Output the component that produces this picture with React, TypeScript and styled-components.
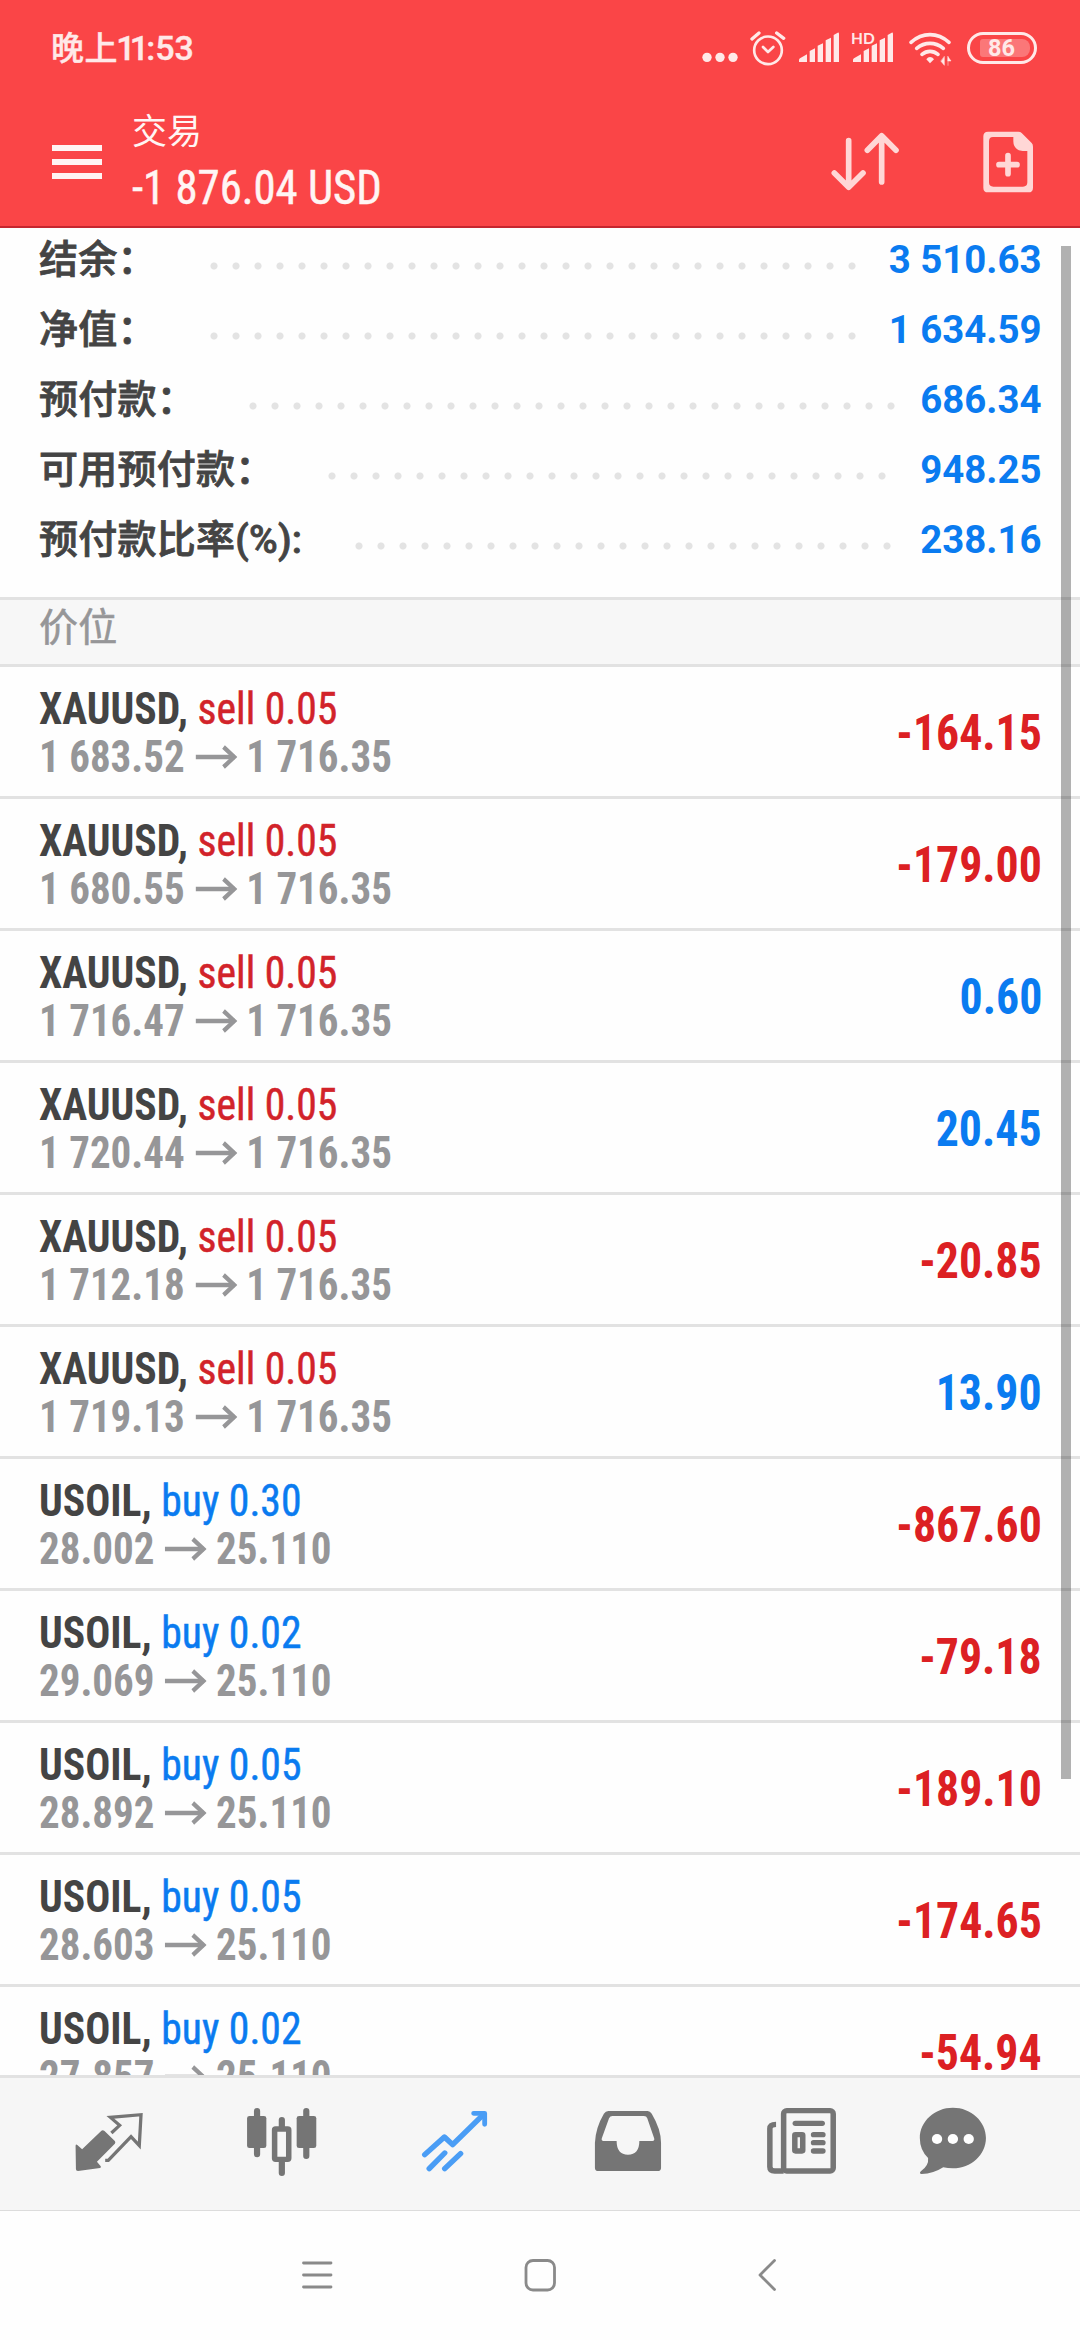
import React from "react";
import styled, { createGlobalStyle } from "styled-components";

const GlobalStyle = createGlobalStyle`
  body {
    margin: 0;
    background: #fff;
  }
  * {
    box-sizing: border-box;
  }
`;

const sans = `Roboto, "Noto Sans CJK SC", sans-serif`;
const condensed = `"Roboto Condensed", Roboto, "Noto Sans CJK SC", sans-serif`;

const color = {
  red: "#fa4547",
  loss: "#dc2023",
  sell: "#d2232a",
  blue: "#0a7bf0",
  text: "#444",
  muted: "#969698",
  line: "#e2e2e2",
  panel: "#f7f7f7",
  icon: "#757575",
};

const Screen = styled.div`
  width: 1080px;
  height: 2340px;
  display: flex;
  flex-direction: column;
  overflow: hidden;
  background: #fefefe;
  font-family: ${sans};
`;

/* ---------- top area ---------- */

const Header = styled.header`
  flex: none;
  height: 228px;
  background: ${color.red};
  border-bottom: 2px solid #c5262f;
`;

const StatusBar = styled.div`
  height: 100px;
  padding: 0 44px 0 51px;
  display: flex;
  justify-content: space-between;
  color: #ffe9e8;
`;

const Clock = styled.div`
  font-size: 34px;
  line-height: 97px;
  font-weight: 500;
  white-space: nowrap;
  -webkit-text-stroke: 0.4px currentColor;
`;

const ClockPeriod = styled.span`
  font-family: "Noto Sans CJK SC", sans-serif;
  font-size: 33px;
  line-height: 1;
  letter-spacing: 0.6px;
`;

const ClockHour = styled.span`
  letter-spacing: -5.8px;
  margin-left: -2px;
  margin-right: 3px;
`;

const StatusIcons = styled.div`
  display: flex;
  align-items: center;
  gap: 12px;

  svg {
    display: block;
    height: 40px;
  }
`;

const SignalWithLabel = styled.div`
  position: relative;
`;

const HdLabel = styled.span`
  position: absolute;
  left: -1px;
  top: 1px;
  font-family: Lato, sans-serif;
  font-size: 15.5px;
  line-height: 15px;
  font-weight: 700;
`;

const Battery = styled.div`
  width: 70px;
  height: 32px;
  margin: -4px -1px 0 1px;
  padding: 4px 4px 4px 10px;
  border: 3px solid #ffe9e8;
  border-radius: 16px;
  display: flex;
`;

const BatteryLevel = styled.div`
  flex: 1;
  border-radius: 3px 8px 8px 3px;
  background: rgba(255, 255, 255, 0.27);
  font-size: 23.5px;
  line-height: 19px;
  font-weight: 700;
  text-align: center;
  padding-right: 7px;
`;

const Toolbar = styled.div`
  height: 126px;
  padding: 0 46px 0 52px;
  display: flex;
  align-items: center;
`;

const MenuButton = styled.div`
  width: 50px;
  margin: 0 30px 2px 0;
  display: flex;
  flex-direction: column;
  gap: 8px;
`;

const MenuBar = styled.span`
  height: 6px;
  background: #fff4f3;
`;

const Titles = styled.div`
  flex: 1;
  align-self: flex-start;
  padding-top: 6px;
  color: #fff5f4;
  white-space: nowrap;
`;

const Title = styled.div`
  font-size: 35px;
  line-height: 53px;
`;

const Amount = styled.div`
  font-family: ${condensed};
  font-size: 47.5px;
  line-height: 58px;
  transform: scaleX(0.942);
  transform-origin: left;
  -webkit-text-stroke: 0.5px currentColor;
`;

const Actions = styled.div`
  display: flex;
  gap: 82px;

  svg {
    display: block;
    height: 64px;
  }
`;

/* ---------- scrolling content ---------- */

const Content = styled.main`
  position: relative;
  flex: none;
  height: 1847px;
  overflow: hidden;
`;

const ScrollThumb = styled.div`
  position: absolute;
  top: 18px;
  right: 9px;
  width: 10px;
  height: 1533px;
  background: rgba(0, 0, 0, 0.3);
`;

const Summary = styled.section`
  height: 369px;
  padding: 0 38.5px 0 39px;
  display: flex;
  flex-direction: column;
  gap: 6px;
`;

const SummaryRow = styled.div`
  display: flex;
  justify-content: space-between;
  font-size: 39px;
  line-height: 64px;
  white-space: nowrap;
`;

const SummaryLabel = styled.div`
  display: flex;
  color: ${color.text};
  font-weight: 500;
  letter-spacing: 0.25px;
  -webkit-text-stroke: 0.8px currentColor;
`;

const Leader = styled.span<{ $dots: number }>`
  width: ${(p) => p.$dots * 22}px;
  height: 8px;
  margin: 34px 0 0 46px;
  background: radial-gradient(circle at 11px 4px, #e3e3e3 3.1px, rgba(227, 227, 227, 0) 4px);
  background-size: 22px 8px;
`;

const SummaryValue = styled.div`
  color: ${color.blue};
  font-size: 38.4px;
  font-weight: 700;
`;

const SectionTitle = styled.h2`
  margin: 0;
  height: 70px;
  padding: 0 39px;
  border: solid ${color.line};
  border-width: 3px 0;
  background: ${color.panel};
  color: ${color.muted};
  font-size: 39px;
  line-height: 57px;
  font-weight: 400;
  letter-spacing: 0.25px;
  -webkit-text-stroke: 0.6px currentColor;
`;

const PositionRow = styled.div`
  height: 132px;
  padding: 0 38px 0 39px;
  border-bottom: 3px solid ${color.line};
  display: flex;
  justify-content: space-between;
  align-items: flex-start;
  font-family: ${condensed};
  white-space: nowrap;
`;

const Deal = styled.div`
  padding-top: 18px;
  font-size: 44px;
  line-height: 48px;
`;

const Symbol = styled.div`
  color: ${color.text};
  font-weight: 700;
  transform: scaleX(0.946);
  transform-origin: left;
`;

const Side = styled.span<{ $side: "buy" | "sell" }>`
  color: ${(p) => (p.$side === "buy" ? color.blue : color.sell)};
  font-weight: 400;
  -webkit-text-stroke: 0.5px currentColor;
`;

const Prices = styled.div`
  display: flex;
  align-items: center;
  color: ${color.muted};
  font-weight: 700;
  transform: scaleX(0.932);
  transform-origin: left;

  svg {
    width: 45px;
    height: 24px;
    margin: 0 9.5px 0 11.5px;
  }
`;

const Profit = styled.div<{ $loss: boolean }>`
  color: ${(p) => (p.$loss ? color.loss : color.blue)};
  font-size: 50px;
  line-height: 132px;
  font-weight: 700;
  transform: scaleX(0.916);
  transform-origin: right;
`;

/* ---------- bottom area ---------- */

const TabBar = styled.nav`
  flex: none;
  height: 136px;
  padding-left: 22px;
  border-top: 3px solid ${color.line};
  border-bottom: 1px solid #dcdcdc;
  background: #f6f6f6;
  display: grid;
  grid-template-columns: repeat(5, 173px) 132px;
  align-items: center;
  justify-items: center;
`;

const TabIcon = styled.svg`
  display: block;
  width: 76px;
  height: 76px;
`;

const SystemNav = styled.footer`
  flex: 1;
  padding-bottom: 2px;
  background: #fefefe;
  display: grid;
  grid-template-columns: repeat(3, 223px);
  justify-content: center;
  align-items: center;
  justify-items: center;
`;

const NavIcon = styled.svg`
  display: block;
  width: 40px;
  height: 40px;
  fill: none;
  stroke: #8a8a8a;
  stroke-width: 2.8;
  stroke-linecap: round;
  stroke-linejoin: round;
`;

/* ---------- icons ---------- */

const tint = "#ffe9e8";
const actionTint = "#ffd7d6";

const SignalBars = () => (
  <svg width="42" viewBox="474 90 126 120" fill={tint}>
    <path d="M477 186V179Q477 177 480 175L501 163V186Z" />
    <path d="M509 186V153L525 145V186Z" />
    <path d="M533 186V137L549 130V186Z" />
    <path d="M557 186V121L573 113V186Z" />
    <path d="M581 186V105L593 98Q597 97 597 101V186Z" />
  </svg>
);

const MoreDots = () => (
  <svg width="36" viewBox="188 90 108 120" fill={tint}>
    <circle cx="203" cy="172" r="14" />
    <circle cx="242" cy="172" r="14" />
    <circle cx="281" cy="172" r="14" />
  </svg>
);

const AlarmIcon = () => (
  <svg width="36" viewBox="330 90 108 120" fill="none" stroke={tint} strokeLinecap="round">
    <circle cx="384" cy="151" r="41.5" strokeWidth="8" />
    <path d="M369 141L384 156L400 141" strokeWidth="8" strokeLinejoin="round" />
    <path d="M336 117L357 99M410 99L431 115" strokeWidth="10" />
  </svg>
);

const WifiIcon = () => (
  <svg width="48" viewBox="798 90 144 120" fill="none" stroke={tint} strokeWidth="11" strokeLinecap="round">
    <path d="M813 127Q839 104 870 104T927 127" />
    <path d="M830 145Q848 130 870 130T910 145" />
    <path d="M846 163Q857 154 870 154T894 163" />
    <path d="M870 171Q877 171 882 178L870 190L859 178Q864 171 870 171Z" fill={tint} stroke="none" />
    <path d="M913 170V196L903 184ZM924 170V196M924 170L933 183H924Z" fill={tint} strokeWidth="1.5" />
  </svg>
);

const SortIcon = () => (
  <svg width="70" viewBox="570 393 210 192" fill="none" stroke={actionTint} strokeWidth="17" strokeLinecap="round" strokeLinejoin="round">
    <path d="M626 422V560M583 519L626 562L669 519" />
    <path d="M725 546V408M682 451L725 407L768 451" />
  </svg>
);

const NewOrderIcon = () => (
  <svg width="52" viewBox="1026 393 156 192" fill={actionTint}>
    <path
      fillRule="evenodd"
      d="M1044 395H1135Q1141 395 1145 399L1175 429Q1179 433 1179 440V563Q1179 577 1165 577H1044Q1030 577 1030 563V409Q1030 395 1044 395ZM1059 411Q1047 411 1047 424V547Q1047 560 1060 560H1149Q1162 560 1162 547V453H1148Q1120 450 1120 424V411Z"
    />
    <path d="M1104 467V521M1077 494H1131" stroke={actionTint} strokeWidth="17" strokeLinecap="round" />
  </svg>
);

const ArrowRight = () => (
  <svg viewBox="0 0 45 24" preserveAspectRatio="none" fill="none" stroke="currentColor" strokeWidth="4.4">
    <path d="M0 12H42" />
    <path d="M30 2L41.5 12L30 22" />
  </svg>
);

const QuotesIcon = () => (
  <TabIcon viewBox="204.7 438 220.7 228" preserveAspectRatio="none">
    <path
      d="M218 557Q219 551 223 555L237 568L293 512Q297 509 302 513L332 543Q335 547 332 551L280 605L291 619Q293 623 289 624L225 633Q219 633 219 628Z"
      fill={color.icon}
    />
    <path d="M322 519L346 496L319 472L408 464L403 557L379 530L313 601H304" fill="none" stroke={color.icon} strokeWidth="9.5" />
  </TabIcon>
);

const ChartIcon = () => (
  <TabIcon viewBox="707.1 438 220.7 228" preserveAspectRatio="none" fill={color.icon} stroke={color.icon}>
    <path d="M745 453V583M888 453V588M817 480V503M817 603V639" strokeWidth="18" strokeLinecap="round" />
    <rect x="716" y="468" width="56" height="96" rx="7" stroke="none" />
    <rect x="860" y="468" width="57" height="96" rx="7" stroke="none" />
    <rect x="796" y="507" width="41" height="91" rx="3" fill="#f6f6f6" strokeWidth="16" />
  </TabIcon>
);

const TradeIcon = () => (
  <TabIcon viewBox="1209.5 438 220.7 228" preserveAspectRatio="none" fill="none" stroke="#4a9df5" strokeWidth="16" strokeLinecap="round" strokeLinejoin="round">
    <path d="M1232 584L1289 531L1313 554L1402 464" />
    <path d="M1374 460H1406V493" strokeWidth="14" />
    <path d="M1245 626L1290 579M1290 626L1336 581" />
  </TabIcon>
);

const HistoryIcon = () => (
  <TabIcon viewBox="143.7 438 220.7 228" preserveAspectRatio="none" fill={color.icon}>
    <path
      fillRule="evenodd"
      d="M197 453H311Q318 453 323 461Q350 508 350 548V623Q350 633 340 633H168Q158 633 158 623V548Q160 503 184 461Q189 453 197 453ZM209 468Q202 468 199 475L178 535Q176 543 183 543H221Q221 584 254 584T287 543H325Q332 543 330 535L310 475Q308 468 300 468Z"
    />
  </TabIcon>
);

const NewsIcon = () => (
  <TabIcon viewBox="646.1 438 220.7 228" preserveAspectRatio="none" fill="none" stroke={color.icon} strokeWidth="16">
    <rect x="706" y="452" width="144" height="181" rx="9" />
    <path d="M684 493Q666 493 666 506V620Q666 633 680 633H706" />
    <path d="M740 490H818" strokeLinecap="round" />
    <path d="M793 524H820M793 548H820M793 573H820" strokeLinecap="round" />
    <rect x="738.500" y="524" width="23" height="49" rx="2" />
  </TabIcon>
);

const ChatIcon = () => (
  <TabIcon viewBox="1089 438 220.7 228" preserveAspectRatio="none" fill={color.icon}>
    <path d="M1199 443C1252 443 1295 484 1295 534S1252 625 1199 625Q1184 625 1171 622Q1143 641 1108 642Q1100 641 1106 634Q1130 616 1127 594Q1103 570 1103 534C1103 484 1146 443 1199 443Z" />
    <g fill="#fff">
      <circle cx="1153" cy="537" r="15" />
      <circle cx="1199" cy="537" r="15" />
      <circle cx="1245" cy="537" r="15" />
    </g>
  </TabIcon>
);

/* ---------- data ---------- */

const summary = [
  { label: "结余：", value: "3 510.63", dots: 30 },
  { label: "净值：", value: "1 634.59", dots: 30 },
  { label: "预付款：", value: "686.34", dots: 30 },
  { label: "可用预付款：", value: "948.25", dots: 26 },
  { label: "预付款比率(%):", value: "238.16", dots: 25 },
];

type Position = {
  symbol: string;
  side: "buy" | "sell";
  volume: string;
  open: string;
  current: string;
  profit: string;
};

const gold = (open: string, profit: string): Position => ({
  symbol: "XAUUSD",
  side: "sell",
  volume: "0.05",
  open,
  current: "1 716.35",
  profit,
});

const oil = (volume: string, open: string, profit: string): Position => ({
  symbol: "USOIL",
  side: "buy",
  volume,
  open,
  current: "25.110",
  profit,
});

const positions: Position[] = [
  gold("1 683.52", "-164.15"),
  gold("1 680.55", "-179.00"),
  gold("1 716.47", "0.60"),
  gold("1 720.44", "20.45"),
  gold("1 712.18", "-20.85"),
  gold("1 719.13", "13.90"),
  oil("0.30", "28.002", "-867.60"),
  oil("0.02", "29.069", "-79.18"),
  oil("0.05", "28.892", "-189.10"),
  oil("0.05", "28.603", "-174.65"),
  oil("0.02", "27.857", "-54.94"),
];

export default function App() {
  return (
    <Screen lang="zh-CN">
      <GlobalStyle />
      <Header>
        <StatusBar>
          <Clock>
            <ClockPeriod>晚上</ClockPeriod>
            <ClockHour>11</ClockHour>:53
          </Clock>
          <StatusIcons>
            <MoreDots />
            <AlarmIcon />
            <SignalBars />
            <SignalWithLabel>
              <SignalBars />
              <HdLabel>HD</HdLabel>
            </SignalWithLabel>
            <WifiIcon />
            <Battery>
              <BatteryLevel>86</BatteryLevel>
            </Battery>
          </StatusIcons>
        </StatusBar>
        <Toolbar>
          <MenuButton>
            <MenuBar />
            <MenuBar />
            <MenuBar />
          </MenuButton>
          <Titles>
            <Title>交易</Title>
            <Amount>-1 876.04 USD</Amount>
          </Titles>
          <Actions>
            <SortIcon />
            <NewOrderIcon />
          </Actions>
        </Toolbar>
      </Header>

      <Content>
        <Summary>
          {summary.map((row) => (
            <SummaryRow key={row.label}>
              <SummaryLabel>
                {row.label}
                <Leader $dots={row.dots} />
              </SummaryLabel>
              <SummaryValue>{row.value}</SummaryValue>
            </SummaryRow>
          ))}
        </Summary>
        <SectionTitle>价位</SectionTitle>
        {positions.map((p) => (
          <PositionRow key={p.open}>
            <Deal>
              <Symbol>
                {p.symbol}, <Side $side={p.side}>{p.side} {p.volume}</Side>
              </Symbol>
              <Prices>
                {p.open}
                <ArrowRight />
                {p.current}
              </Prices>
            </Deal>
            <Profit $loss={p.profit.startsWith("-")}>{p.profit}</Profit>
          </PositionRow>
        ))}
        <ScrollThumb />
      </Content>

      <TabBar>
        <QuotesIcon />
        <ChartIcon />
        <TradeIcon />
        <HistoryIcon />
        <NewsIcon />
        <ChatIcon />
      </TabBar>

      <SystemNav>
        <NavIcon viewBox="0 0 40 40">
          <path d="M6.500 8H34M6.500 20H34M6.500 32H34" />
        </NavIcon>
        <NavIcon viewBox="0 0 40 40">
          <rect x="6" y="5.500" width="28.500" height="29.500" rx="7" />
        </NavIcon>
        <NavIcon viewBox="0 0 40 40">
          <path d="M31.500 5.500L17 20L31.500 34.500" />
        </NavIcon>
      </SystemNav>
    </Screen>
  );
}
